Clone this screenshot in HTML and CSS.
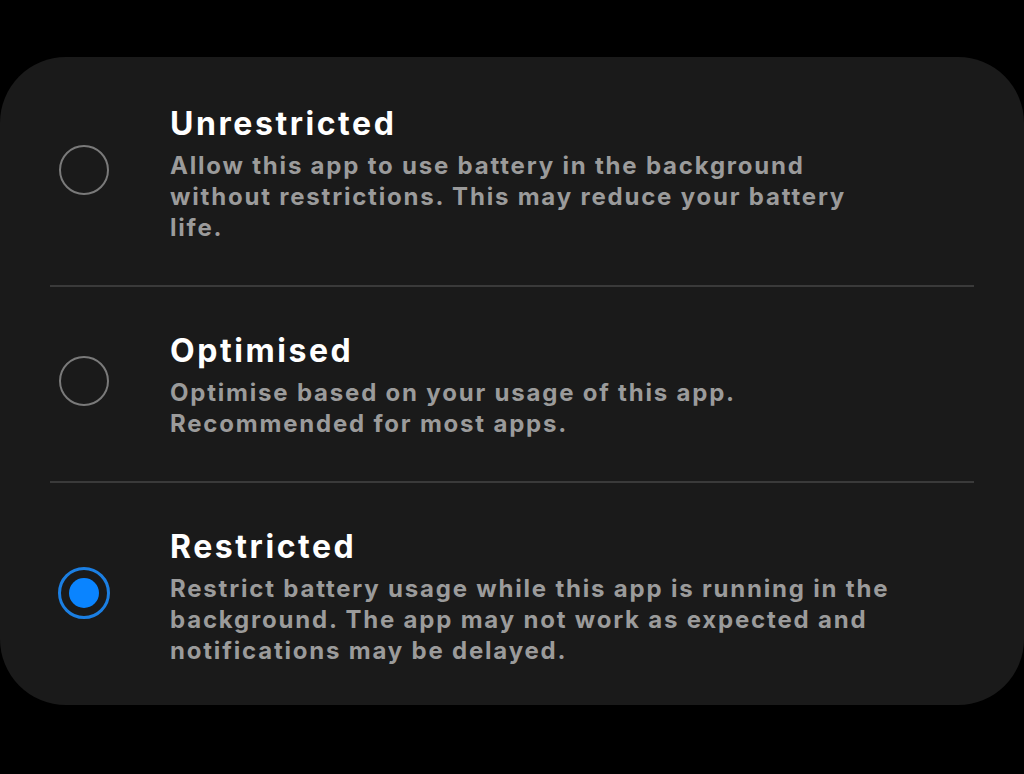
FILE: index.html
```html
<!DOCTYPE html>
<html>
<head>
<meta charset="utf-8">
<link rel="stylesheet" href="styles.css">
</head>
<body>
<div class="screen">
  <div class="card">
    <div class="option">
      <span class="radio"></span>
      <div class="text">
        <div class="title">Unrestricted</div>
        <div class="desc">Allow this app to use battery in the background<br>without restrictions. This may reduce your battery<br>life.</div>
      </div>
    </div>
    <div class="option">
      <span class="radio"></span>
      <div class="text">
        <div class="title">Optimised</div>
        <div class="desc">Optimise based on your usage of this app.<br>Recommended for most apps.</div>
      </div>
    </div>
    <div class="option">
      <span class="radio checked"></span>
      <div class="text">
        <div class="title">Restricted</div>
        <div class="desc">Restrict battery usage while this app is running in the<br>background. The app may not work as expected and<br>notifications may be delayed.</div>
      </div>
    </div>
  </div>
</div>
</body>
</html>
```
FILE: styles.css
```css
html, body {
  margin: 0;
  padding: 0;
  background: #000;
}
.screen {
  width: 1024px;
  height: 774px;
  padding-top: 57px;
  box-sizing: border-box;
  font-family: Inter, "Noto Sans", sans-serif;
}
.card {
  width: 1024px;
  height: 648px;
  box-sizing: border-box;
  background: #1a1a1a;
  border-radius: 66px;
  padding: 0 50px;
}
.option {
  display: flex;
  align-items: center;
  gap: 61px;
  padding: 47px 0 42px 9px;
}
.option + .option {
  border-top: 2px solid #3a3a3a;
  padding-top: 44px;
}
.radio {
  flex: none;
  width: 50px;
  height: 50px;
  margin-bottom: 8px;
  box-sizing: border-box;
  border: 2px solid #7a7a7a;
  border-radius: 50%;
  position: relative;
}
.radio.checked {
  width: 52px;
  height: 52px;
  margin-left: -1px;
  margin-right: -1px;
  border: 3px solid #1b7fe3;
}
.radio.checked::after {
  content: "";
  position: absolute;
  left: 8px;
  top: 8px;
  width: 30px;
  height: 30px;
  border-radius: 50%;
  background: #0a84ff;
}
.title {
  color: #fff;
  font-weight: 700;
  font-size: 32px;
  line-height: 40px;
  letter-spacing: 0.08em;
  margin-bottom: 6px;
}
.desc {
  color: #9b9b9b;
  font-weight: 700;
  font-size: 24px;
  line-height: 31px;
  letter-spacing: 0.075em;
}
```
